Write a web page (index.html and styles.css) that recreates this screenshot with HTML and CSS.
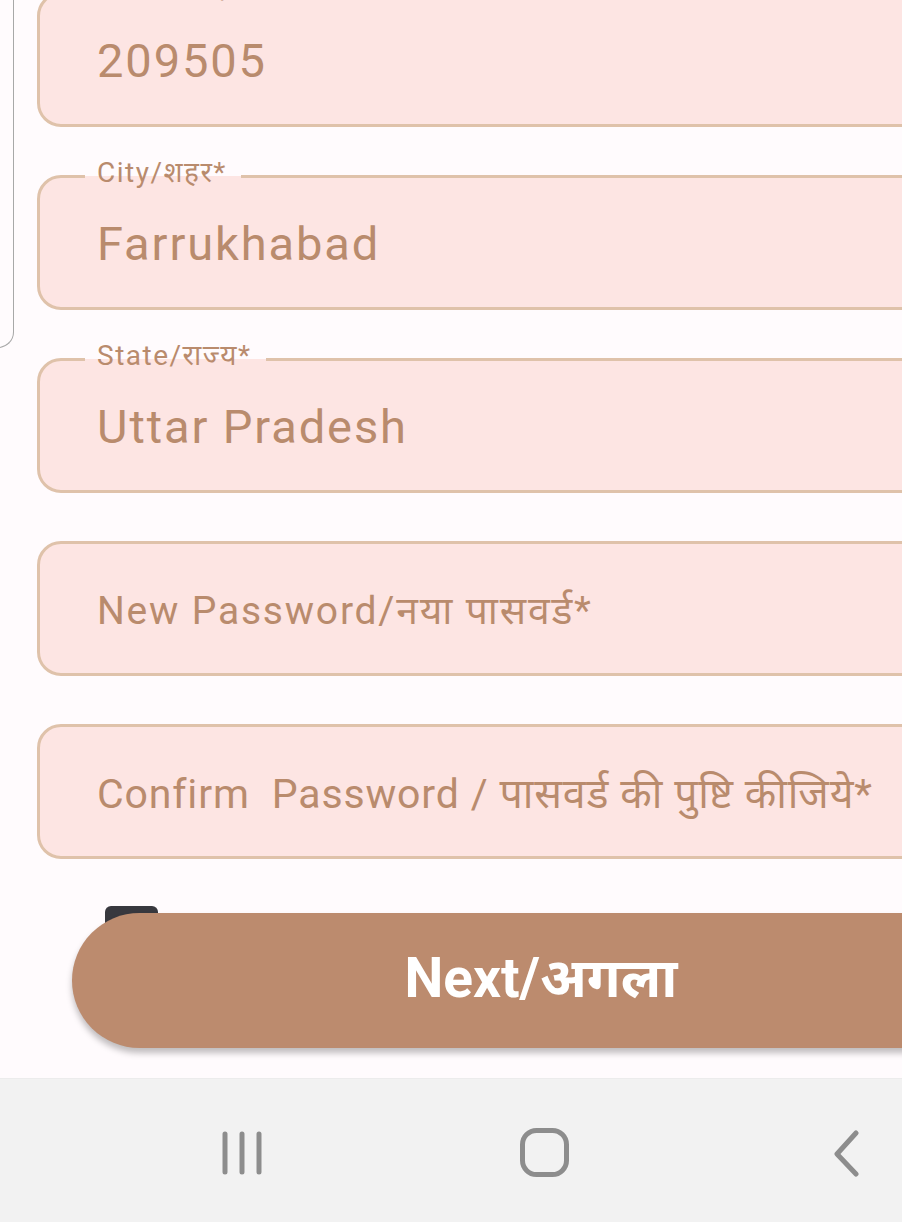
FILE: index.html
```html
<!DOCTYPE html>
<html lang="hi">
<head>
<meta charset="utf-8">
<link rel="stylesheet" href="styles.css">
</head>
<body>
<div class="screen">
  <div class="prev-card"></div>
  <div class="form">
    <div class="field first">
      <span class="label">Pin Code/पिन कोड*</span>
      <span class="value">209505</span>
    </div>
    <div class="field">
      <span class="label">City/शहर*</span>
      <span class="value">Farrukhabad</span>
    </div>
    <div class="field">
      <span class="label">State/राज्य*</span>
      <span class="value">Uttar Pradesh</span>
    </div>
    <div class="field">
      <span class="placeholder">New Password/नया पासवर्ड*</span>
    </div>
    <div class="field">
      <span class="placeholder narrow">Confirm&nbsp; Password / पासवर्ड की पुष्टि कीजिये*</span>
    </div>
    <div class="check-row">
      <span class="checkbox"></span>
    </div>
  </div>
  <button class="next-btn">Next/अगला</button>
  <nav class="navbar">
    <svg class="nav-icon" width="48" height="48" viewBox="0 0 48 48">
      <path d="M5 5v38M22 5v38M39 5v38" stroke="#8d8d8d" stroke-width="5" stroke-linecap="round" fill="none"/>
    </svg>
    <svg class="nav-icon" width="52" height="52" viewBox="0 0 52 52">
      <rect x="3.5" y="3.5" width="44" height="44" rx="14" stroke="#8d8d8d" stroke-width="5" fill="none"/>
    </svg>
    <svg class="nav-icon" width="36" height="48" viewBox="0 0 36 48">
      <path d="M28 4L9 25L28 45" stroke="#8d8d8d" stroke-width="5" stroke-linecap="round" stroke-linejoin="round" fill="none"/>
    </svg>
  </nav>
</div>
</body>
</html>
```
FILE: styles.css
```css
* { box-sizing: border-box; }
html, body {
  margin: 0;
  padding: 0;
  width: 902px;
  height: 1222px;
  overflow: hidden;
  background: #fffbfd;
}
body {
  font-family: Roboto, "Noto Sans", "Noto Sans Devanagari", sans-serif;
  color: #b98b6d;
}
.screen {
  position: relative;
  width: 902px;
  height: 1222px;
  overflow: hidden;
  display: flex;
  flex-direction: column;
}
.prev-card {
  position: absolute;
  left: -100px;
  top: -20px;
  width: 114px;
  height: 368px;
  border-right: 1.5px solid #a8a8a8;
  border-bottom: 1.5px solid #a8a8a8;
  border-bottom-right-radius: 16px;
}
.form {
  flex: 1;
  display: flex;
  flex-direction: column;
  gap: 48px;
  padding-left: 37px;
  margin-top: -8px;
}
.field {
  position: relative;
  flex: none;
  width: 920px;
  height: 135px;
  border: 3px solid #dfc2aa;
  border-radius: 24px;
  background: #fde5e3;
  display: flex;
  align-items: center;
  padding-left: 57px;
}
.label {
  position: absolute;
  left: 45px;
  top: -21px;
  height: 32px;
  line-height: 32px;
  padding: 0 14px 0 12px;
  font-size: 28px;
  letter-spacing: 1.5px;
  white-space: nowrap;
  background: linear-gradient(to bottom, #fffbfd 0, #fffbfd 19px, #fde5e3 19px);
}
.value {
  font-size: 47px;
  letter-spacing: 1.9px;
  margin-top: 2px;
}
.placeholder {
  font-size: 39px;
  letter-spacing: 1.8px;
  white-space: nowrap;
}
.placeholder.narrow {
  font-size: 41px;
  letter-spacing: 0.85px;
}
.check-row {
  height: 40px;
  margin-top: -1px;
  padding-left: 68px;
}
.checkbox {
  display: block;
  width: 53px;
  height: 40px;
  border-radius: 6px;
  background: #38383e;
}
.next-btn {
  position: absolute;
  left: 72px;
  top: 913px;
  width: 938px;
  height: 135px;
  border: none;
  border-radius: 68px;
  background: #bc8b6e;
  color: #ffffff;
  font-family: Roboto, "Noto Sans", sans-serif;
  font-weight: 700;
  font-size: 55px;
  line-height: 1;
  box-shadow: 0 5px 6px rgba(0,0,0,0.25);
  padding: 0 0 4px 0;
}
.navbar {
  flex: none;
  height: 144px;
  background: #f2f2f2;
  border-top: 1px solid #ececec;
  display: flex;
  align-items: center;
  position: relative;
  z-index: 2;
  padding-top: 4px;
}
.nav-icon:nth-child(1) { margin-left: 220px; }
.nav-icon:nth-child(2) { margin-left: 251px; }
.nav-icon:nth-child(3) { margin-left: 257px; }
```
